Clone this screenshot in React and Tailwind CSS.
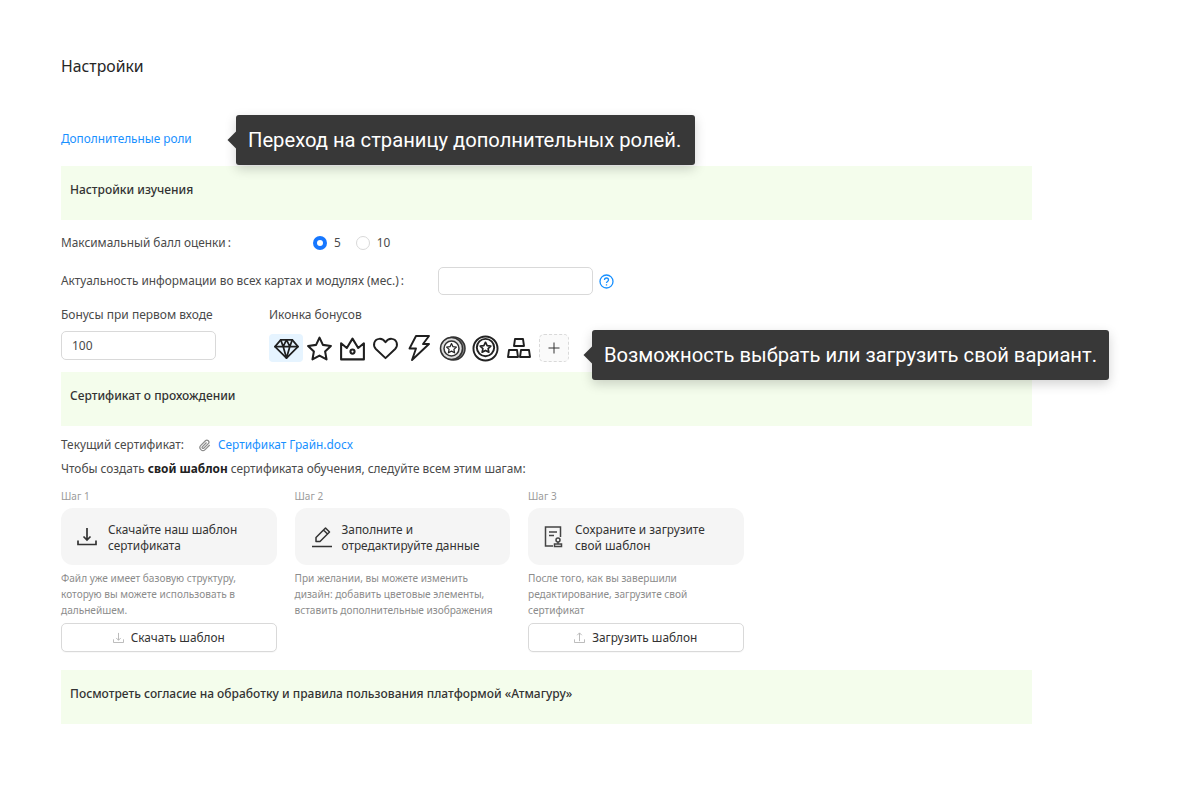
import React from "react";

const font = "font-['Noto_Sans','Open_Sans',sans-serif]";

const Tooltip = ({ className, children }) => (
  <div className={`absolute flex h-[50px] items-center rounded-[3px] bg-[#383838] px-3 font-['Roboto',sans-serif] text-[20.2px] text-white shadow-[0_4px_12px_rgba(0,0,0,0.18)] ${className}`}>
    <span className="absolute left-[-6px] top-[19px] h-3 w-3 rotate-45 bg-[#383838]"></span>
    <span className="relative whitespace-nowrap">{children}</span>
  </div>
);

const Banner = ({ children }) => (
  <div className="h-[54px] bg-[#f4fdec] pl-[9px] pt-[14px] text-[12px] leading-[20px] font-medium text-[#333]">
    {children}
  </div>
);

const iconProps = {
  fill: "none",
  stroke: "#1f1f1f",
  strokeWidth: 2,
  strokeLinejoin: "round",
  strokeLinecap: "round",
};

const BonusIcons = () => (
  <div className="flex h-7 items-center">
    <div className="flex h-7 w-[34px] items-center justify-center rounded-[4px] bg-[#e6f4ff]">
      <svg width="27" height="23" viewBox="0 0 28 24" {...iconProps} strokeWidth="1.8">
        <path d="M8 3h12l6 7-12 12L2 10z" />
        <path d="M2 10h24M8 3l2.500 7L14 22l3.500-12L20 3M10.500 10 14 3l3.500 7" />
      </svg>
    </div>
    <svg className="ml-[2px]" width="29" height="27" viewBox="0 0 28 26" {...iconProps}>
      <path d="m14 2.500 3.300 7 7.700 1-5.600 5.300 1.400 7.700-6.800-3.700-6.800 3.700 1.400-7.700L3 10.500l7.700-1z" />
    </svg>
    <svg className="ml-[4px]" width="29" height="27" viewBox="0 0 28 26" {...iconProps}>
      <path d="M3 8 8.500 12.500 14 3.500l5.500 9L25 8v15.500H3z" />
      <circle cx="14" cy="16" r="2" />
    </svg>
    <svg className="ml-[5px]" width="27" height="26" viewBox="0 0 28 26" {...iconProps}>
      <path d="M14 23.500 4 14C.5 10.500 2 4 7.500 3.500c3-.3 5 1.300 6.500 3.500 1.500-2.200 3.500-3.800 6.500-3.500C26 4 27.500 10.500 24 14z" />
    </svg>
    <svg className="ml-[8px]" width="24" height="28" viewBox="0 0 24 28" {...iconProps} strokeWidth="1.9">
      <path d="M9 2h13l-6 8h6L5 26l4-11.500H2.500z" />
    </svg>
    <svg className="ml-[8px]" width="27" height="27" viewBox="0 0 27 27" fill="none">
      <circle cx="14.500" cy="13.500" r="11.500" fill="#8a8a8a" stroke="#333" strokeWidth="1.500" />
      <circle cx="12.500" cy="13.500" r="11" fill="#ddd" stroke="#333" strokeWidth="1.500" />
      <circle cx="12.500" cy="13.500" r="7.500" fill="#fff" stroke="#333" strokeWidth="1.500" />
      <path d="m12.500 8.500 1.500 3.200 3.400.4-2.500 2.300.7 3.400-3.100-1.700-3.100 1.700.7-3.400-2.500-2.300 3.400-.4z" stroke="#222" strokeWidth="1.200" strokeLinejoin="round" />
    </svg>
    <svg className="ml-[6px]" width="27" height="27" viewBox="0 0 28 28" fill="none">
      <circle cx="14" cy="14" r="12.500" fill="#fff" stroke="#222" strokeWidth="2" />
      <circle cx="14" cy="13" r="9" stroke="#222" strokeWidth="2" />
      <path d="m14 7.500 1.700 3.500 3.800.5-2.800 2.600.8 3.800-3.500-1.900-3.500 1.900.8-3.800-2.800-2.600 3.800-.5z" stroke="#222" strokeWidth="1.700" strokeLinejoin="round" />
    </svg>
    <svg className="ml-[7px]" width="26" height="24" viewBox="0 0 26 24" {...iconProps} strokeWidth="1.900" strokeLinecap="butt">
      <path d="M9 3h8l1 7H8zM3 14h8l1 7H2zM15 14h8l1 7H14z" />
    </svg>
    <div className="ml-[7px] flex h-7 w-[30px] items-center justify-center rounded-[5px] border border-dashed border-[#d9d9d9] bg-[#fafafa]">
      <svg width="12" height="12" viewBox="0 0 12 12" stroke="#333" strokeWidth="1">
        <path d="M6 .5v11M.5 6h11" />
      </svg>
    </div>
  </div>
);

const DownloadIcon = () => (
  <svg width="20" height="20" viewBox="0 0 20 20" fill="none" stroke="#333" strokeWidth="1.700">
    <path d="M10 1v11.500M6.500 9.500l3.500 3.500 3.500-3.500M1 13.500v4h18v-4" />
  </svg>
);

const EditIcon = () => (
  <svg width="22" height="22" viewBox="0 0 22 22" fill="none" stroke="#333" strokeWidth="1.500" strokeLinejoin="round">
    <path d="M5 15.500v-4L14.500 2l4 4-9.500 9.500zM12.500 4l4 4M1 20.500h20" />
  </svg>
);

const SaveIcon = () => (
  <svg width="20" height="24" viewBox="0 0 20 24" fill="none" stroke="#444" strokeWidth="1.500">
    <path d="M9 21H1.500V2h15v10M5 7h8M5 10.500h5" />
    <circle cx="14" cy="15" r="2" />
    <path d="M14 17v1.500M10.500 19h7v2.500h-7z" />
  </svg>
);

const UploadSmall = ({ flip }) => (
  <svg width="11" height="11" viewBox="0 0 12 12" fill="none" stroke="#b5b5b5" strokeWidth="1">
    <path d={flip ? "M6 10V1M3.500 3.500 6 1l2.500 2.500M.5 8v3.500h11V8" : "M6 1v8M3.500 6.500 6 9l2.500-2.500M.5 8v3.500h11V8"} />
  </svg>
);

const Step = ({ title, icon, text, note, button, flip }) => (
  <div className="w-[215.5px]">
    <div className="h-[15px] text-[10px] leading-[15px] text-[#9a9a9a]">{title}</div>
    <div className="mt-[4px] flex h-[57px] items-center rounded-[12px] bg-[#f5f5f5] pl-4 text-[11.85px] leading-[16px] text-[#333]">
      <div className="flex w-[31px] shrink-0 justify-start">{icon}</div>
      <div className="whitespace-pre-line">{text}</div>
    </div>
    <div className="mt-[5px] h-[49px] whitespace-pre-line text-[10.1px] leading-[16px] text-[#8c8c8c]">{note}</div>
    {button && (
      <div className="mt-[4px] flex h-[29px] items-center justify-center gap-[7px] rounded-[5px] border border-[#d9d9d9] bg-white text-[11.85px] text-[#333] shadow-[0_1px_1px_rgba(0,0,0,0.03)]">
        <UploadSmall flip={flip} />
        {button}
      </div>
    )}
  </div>
);

export default function App() {
  return (
    <div className={`relative h-[809px] w-[1185px] overflow-hidden bg-white ${font}`}>
      <div className="w-[1032px] pl-[61px] pt-[55px]">
        <div className="text-[15.8px] leading-[22px] text-[#262626]">Настройки</div>
        <div className="mt-[50px] h-[39px] text-[11.8px] leading-[22px] text-[#1890ff]">Дополнительные роли</div>
        <Banner>Настройки изучения</Banner>

        <div className="mt-[13px] flex h-[20px] items-center text-[11.85px] text-[#4a4a4a]">
          <div className="w-[252px]">Максимальный балл оценки<span className="ml-[2px]">:</span></div>
          <span className="flex h-[14px] w-[14px] items-center justify-center rounded-full bg-[#1677ff]">
            <span className="h-[6px] w-[6px] rounded-full bg-white"></span>
          </span>
          <span className="ml-[7px]">5</span>
          <span className="ml-[15px] h-[14px] w-[14px] rounded-full border border-[#d9d9d9]"></span>
          <span className="ml-[7px]">10</span>
        </div>

        <div className="mt-[14px] flex h-[28px] items-center text-[11.85px] text-[#4a4a4a]">
          <div className="w-[377px]">Актуальность информации во всех картах и модулях (мес.)<span className="ml-[2px]">:</span></div>
          <div className="h-[28px] w-[155px] rounded-[5px] border border-[#d9d9d9] bg-white"></div>
          <svg className="ml-[6px]" width="15" height="15" viewBox="0 0 15 15" fill="none" stroke="#1890ff" strokeWidth="1.300">
            <circle cx="7.500" cy="7.500" r="6.500" />
            <path d="M5.500 6c0-1.200.9-2 2-2s2 .8 2 1.900c0 1.500-2 1.600-2 3.100M7.500 10.300v1.200" />
          </svg>
        </div>

        <div className="mt-[9px] flex">
          <div className="w-[208px]">
            <div className="text-[12px] leading-[22px] text-[#4a4a4a]">Бонусы при первом входе</div>
            <div className="mt-[5px] flex h-[29px] w-[155px] items-center rounded-[5px] border border-[#d9d9d9] pl-[10px] text-[12px] text-[#4a4a4a]">100</div>
          </div>
          <div>
            <div className="text-[12px] leading-[22px] text-[#4a4a4a]">Иконка бонусов</div>
            <div className="mt-[8px]"><BonusIcons /></div>
          </div>
        </div>

        <div className="mt-[10px]"><Banner>Сертификат о прохождении</Banner></div>

        <div className="mt-[9px] flex h-[20px] items-center text-[11.85px] text-[#4a4a4a]">
          <div className="w-[138px]">Текущий сертификат:</div>
          <svg width="12" height="13" viewBox="0 0 24 24" fill="none" stroke="#8c8c8c" strokeWidth="2.500">
            <path d="m21.400 11-9.200 9.200a6 6 0 0 1-8.500-8.500l9.200-9.200a4 4 0 0 1 5.700 5.700l-9.200 9.200a2 2 0 0 1-2.800-2.800l8.500-8.500" />
          </svg>
          <span className="ml-[7px] text-[#1890ff]">Сертификат Грайн.docx</span>
        </div>
        <div className="mt-[3px] h-[20px] text-[11.85px] leading-[20px] text-[#4a4a4a]">
          Чтобы создать <b className="font-bold text-[#222]">свой шаблон</b> сертификата обучения, следуйте всем этим шагам:
        </div>

        <div className="mt-[11px] flex gap-[18px]">
          <Step
            title="Шаг 1"
            icon={<DownloadIcon />}
            text={"Скачайте наш шаблон\nсертификата"}
            note={"Файл уже имеет базовую структуру,\nкоторую вы можете использовать в\nдальнейшем."}
            button="Скачать шаблон"
          />
          <Step
            title="Шаг 2"
            icon={<EditIcon />}
            text={"Заполните и\nотредактируйте данные"}
            note={"При желании, вы можете изменить\nдизайн: добавить цветовые элементы,\nвставить дополнительные изображения"}
          />
          <Step
            title="Шаг 3"
            icon={<SaveIcon />}
            text={"Сохраните и загрузите\nсвой шаблон"}
            note={"После того, как вы завершили\nредактирование, загрузите свой\nсертификат"}
            button="Загрузить шаблон"
            flip
          />
        </div>

        <div className="mt-[18px]">
          <Banner>Посмотреть согласие на обработку и правила пользования платформой «Атмагуру»</Banner>
        </div>
      </div>

      <Tooltip className="left-[236px] top-[115px] w-[459px]">Переход на страницу дополнительных ролей.</Tooltip>
      <Tooltip className="left-[592px] top-[330px] w-[517px]">Возможность выбрать или загрузить свой вариант.</Tooltip>
    </div>
  );
}
